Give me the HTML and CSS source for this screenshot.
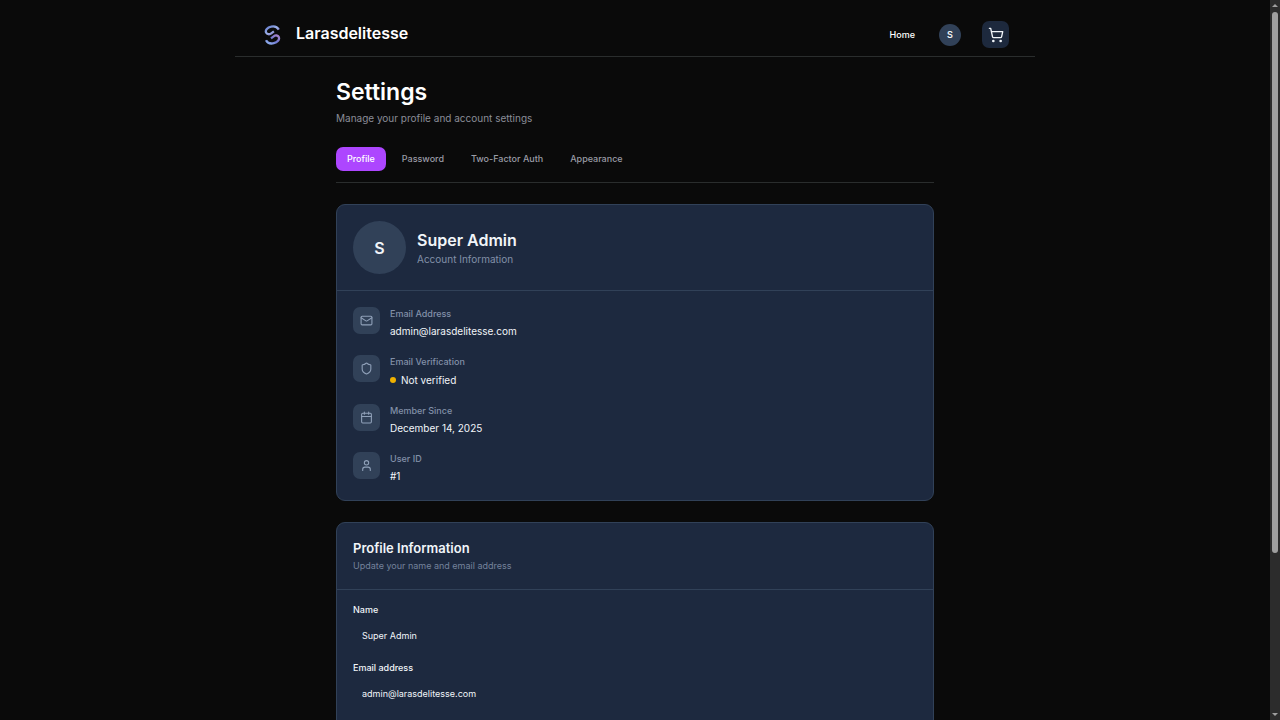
FILE: index.html
```html
<!DOCTYPE html>
<html lang="en">
<head>
    <meta charset="UTF-8">
    <meta name="viewport" content="width=device-width, initial-scale=1.0">
    <title>Settings</title>
    <link rel="stylesheet" href="styles.css">
</head>
<body>
    <header class="site-header">
        <a class="brand" href="#">
            <svg class="brand-logo" viewBox="0 0 18 20">
                <defs>
                    <linearGradient id="logo-top" x1="0" y1="0" x2="1" y2="1">
                        <stop offset="0" stop-color="#5f78cc"/>
                        <stop offset="0.5" stop-color="#9db2ea"/>
                        <stop offset="1" stop-color="#7d62b0"/>
                    </linearGradient>
                    <linearGradient id="logo-bottom" x1="0" y1="1" x2="1" y2="0">
                        <stop offset="0" stop-color="#93b6f2"/>
                        <stop offset="0.5" stop-color="#6f78d0"/>
                        <stop offset="1" stop-color="#a983c8"/>
                    </linearGradient>
                </defs>
                <g fill="none" stroke-width="2.3">
                    <path d="M15.8 4.6C14.4 2 11.2.9 8 1.6 4.400 2.300 2 5.200 3.100 7.600c.9 1.800 3.400 2.200 5.200.8L10.900 6.400" stroke="url(#logo-top)"/>
                    <path d="M3 15.200c1.400 2.600 4.600 3.700 7.800 3 3.600-.7 6.100-3.600 5-6.100-.9-1.800-3.300-2.200-5.100-.8L8 13.400" stroke="url(#logo-bottom)"/>
                </g>
            </svg>
            <span class="brand-name">Larasdelitesse</span>
        </a>
        <nav class="site-nav">
            <a class="nav-link" href="#">Home</a>
            <button class="avatar" type="button">S</button>
            <button class="cart-btn" type="button">
                <svg class="cart-icon" viewBox="0 0 24 24">
                    <circle cx="8" cy="21" r="1"/>
                    <circle cx="19" cy="21" r="1"/>
                    <path d="M2.05 2.05h2l2.66 12.42a2 2 0 0 0 2 1.58h9.78a2 2 0 0 0 1.95-1.57l1.65-7.43H5.12"/>
                </svg>
            </button>
        </nav>
    </header>

    <main class="settings">
        <h1>Settings</h1>
        <p class="subtitle">Manage your profile and account settings</p>

        <nav class="tabs">
            <a class="tab active" href="#">Profile</a>
            <a class="tab" href="#">Password</a>
            <a class="tab" href="#">Two-Factor Auth</a>
            <a class="tab" href="#">Appearance</a>
        </nav>

        <section class="card">
            <div class="card-header account">
                <div class="avatar-large">S</div>
                <div>
                    <h2>Super Admin</h2>
                    <p class="account-note">Account Information</p>
                </div>
            </div>
            <ul class="info-list">
                <li class="info-item">
                    <span class="info-icon">
                        <svg viewBox="0 0 24 24"><rect width="20" height="16" x="2" y="4" rx="2"/><path d="m22 7-8.97 5.7a1.94 1.94 0 0 1-2.06 0L2 7"/></svg>
                    </span>
                    <div>
                        <p class="info-label">Email Address</p>
                        <p class="info-value">admin@larasdelitesse.com</p>
                    </div>
                </li>
                <li class="info-item">
                    <span class="info-icon">
                        <svg viewBox="0 0 24 24"><path d="M20 13c0 5-3.5 7.5-7.66 8.95a1 1 0 0 1-.67-.01C7.5 20.5 4 18 4 13V6a1 1 0 0 1 1-1c2 0 4.5-1.2 6.24-2.72a1.17 1.17 0 0 1 1.52 0C14.51 3.81 17 5 19 5a1 1 0 0 1 1 1z"/></svg>
                    </span>
                    <div>
                        <p class="info-label">Email Verification</p>
                        <p class="info-value status"><span class="status-dot"></span>Not verified</p>
                    </div>
                </li>
                <li class="info-item">
                    <span class="info-icon">
                        <svg viewBox="0 0 24 24"><path d="M8 2v4M16 2v4M3 10h18"/><rect width="18" height="18" x="3" y="4" rx="2"/></svg>
                    </span>
                    <div>
                        <p class="info-label">Member Since</p>
                        <p class="info-value">December 14, 2025</p>
                    </div>
                </li>
                <li class="info-item">
                    <span class="info-icon">
                        <svg viewBox="0 0 24 24"><path d="M19 21v-2a4 4 0 0 0-4-4H9a4 4 0 0 0-4 4v2"/><circle cx="12" cy="7" r="4"/></svg>
                    </span>
                    <div>
                        <p class="info-label">User ID</p>
                        <p class="info-value">#1</p>
                    </div>
                </li>
            </ul>
        </section>

        <section class="card">
            <div class="card-header">
                <h3>Profile Information</h3>
                <p class="card-note">Update your name and email address</p>
            </div>
            <form class="profile-form">
                <div class="field">
                    <label for="name">Name</label>
                    <input type="text" id="name" value="Super Admin">
                </div>
                <div class="field">
                    <label for="email">Email address</label>
                    <input type="email" id="email" value="admin@larasdelitesse.com">
                </div>
            </form>
        </section>
    </main>

    <div class="scrollbar">
        <span class="arrow-up"></span>
        <span class="thumb"></span>
        <span class="arrow-down"></span>
    </div>
</body>
</html>
```
FILE: styles.css
```css
* {
    box-sizing: border-box;
}
html {
    scrollbar-width: none;
    background-color: #0a0a0a;
}
body {
    margin: 0;
    padding-right: 10px;
    background-color: #0a0a0a;
    color: #f1f5f9;
    font-family: Inter, "Liberation Sans", sans-serif;
    font-size: 9px;
    line-height: 14px;
}
h1, h2, h3, p, ul {
    margin: 0;
    padding: 0;
}
a {
    color: inherit;
    text-decoration: none;
}
button, input {
    font: inherit;
    color: inherit;
    border: none;
    padding: 0;
}

/* Header */
.site-header {
    display: flex;
    align-items: center;
    justify-content: space-between;
    max-width: 800px;
    margin: 0 auto;
    padding: 21px 26px 8px 28px;
    border-bottom: 1px solid #2a2d2d;
}
.brand {
    display: flex;
    align-items: center;
    gap: 15px;
}
.brand-logo {
    width: 18px;
    height: 20px;
}
.brand-name {
    padding-bottom: 3px;
    font-size: 16px;
    font-weight: 600;
    line-height: 24px;
    color: #fff;
}
.site-nav {
    display: flex;
    align-items: center;
    gap: 21px;
}
.nav-link {
    font-weight: 500;
    color: #fff;
    margin-right: 3px;
}
.avatar {
    width: 22px;
    height: 22px;
    border-radius: 50%;
    background-color: #314158;
    font-weight: 600;
}
.cart-btn {
    display: flex;
    align-items: center;
    justify-content: center;
    width: 27px;
    height: 27px;
    border-radius: 7px;
    background-color: #1d293d;
}
.cart-icon {
    width: 16px;
    height: 16px;
    fill: none;
    stroke: #f1f5f9;
    stroke-width: 2;
    stroke-linecap: round;
    stroke-linejoin: round;
}

/* Settings page */
.settings {
    max-width: 598px;
    margin: 0 auto;
    padding: 21px 0 64px;
}
h1 {
    font-size: 23px;
    font-weight: 600;
    line-height: 28px;
    color: #fff;
}
.subtitle {
    margin-top: 4px;
    font-size: 10px;
    line-height: 16px;
    color: #8b8d98;
}
.tabs {
    display: flex;
    gap: 5px;
    margin: 21px 0;
    padding-bottom: 11px;
    border-bottom: 1px solid #2a2d2d;
}
.tab {
    padding: 5px 11px;
    border-radius: 7px;
    font-weight: 500;
    color: #9a9ca6;
}
.tab.active {
    background-color: #ad46ff;
    color: #fff;
}

/* Cards */
.card {
    margin-bottom: 21px;
    border: 1px solid #314158;
    border-radius: 9px;
    background-color: #1d293f;
}
.card-header {
    padding: 16px;
    border-bottom: 1px solid #314158;
}
.account {
    display: flex;
    align-items: center;
    gap: 11px;
}
.avatar-large {
    display: flex;
    align-items: center;
    justify-content: center;
    width: 53px;
    height: 53px;
    border-radius: 50%;
    background-color: #314158;
    font-size: 16px;
    font-weight: 600;
}
h2 {
    font-size: 16px;
    font-weight: 600;
    line-height: 22px;
}
.account-note {
    font-size: 10px;
    line-height: 16px;
    color: #8290a8;
}
h3 {
    font-size: 13px;
    font-weight: 600;
    line-height: 18px;
}
.card-note {
    margin-top: 2px;
    color: #74829b;
}

.info-list {
    display: flex;
    flex-direction: column;
    gap: 14px;
    padding: 16px 16px 14px;
    list-style: none;
}
.info-item {
    display: flex;
    align-items: flex-start;
    gap: 10px;
}
.info-icon {
    display: flex;
    align-items: center;
    justify-content: center;
    width: 27px;
    height: 27px;
    border-radius: 7px;
    background-color: #314158;
}
.info-icon svg {
    width: 13px;
    height: 13px;
    fill: none;
    stroke: #90a1b9;
    stroke-width: 2;
    stroke-linecap: round;
    stroke-linejoin: round;
}
.info-label {
    font-weight: 500;
    color: #8290a8;
}
.info-value {
    font-size: 10px;
    line-height: 20px;
}
.status {
    display: flex;
    align-items: center;
    gap: 5px;
    padding-top: 1px;
}
.status-dot {
    width: 6px;
    height: 6px;
    border-radius: 50%;
    background-color: #f0b100;
}

/* Profile form */
.profile-form {
    display: flex;
    flex-direction: column;
    gap: 14px;
    padding: 13px 16px 64px;
}
.field {
    display: flex;
    flex-direction: column;
    gap: 6px;
}
.field label {
    font-weight: 500;
}
.field input {
    width: 100%;
    height: 24px;
    padding: 0 9px;
    border-radius: 5px;
    background-color: transparent;
}

/* Scrollbar */
.scrollbar {
    position: fixed;
    top: 0;
    right: 0;
    bottom: 0;
    display: flex;
    flex-direction: column;
    align-items: center;
    width: 10px;
    padding: 4px 0;
    background-color: #2c2c2c;
}
.arrow-up, .arrow-down {
    border: 3px solid transparent;
}
.arrow-up {
    border-top: none;
    border-bottom-color: #9f9f9f;
}
.arrow-down {
    margin-top: auto;
    border-bottom: none;
    border-top-color: #9f9f9f;
}
.thumb {
    width: 6px;
    height: 76%;
    margin-top: 5px;
    border-radius: 3px;
    background-color: #9f9f9f;
}
```
